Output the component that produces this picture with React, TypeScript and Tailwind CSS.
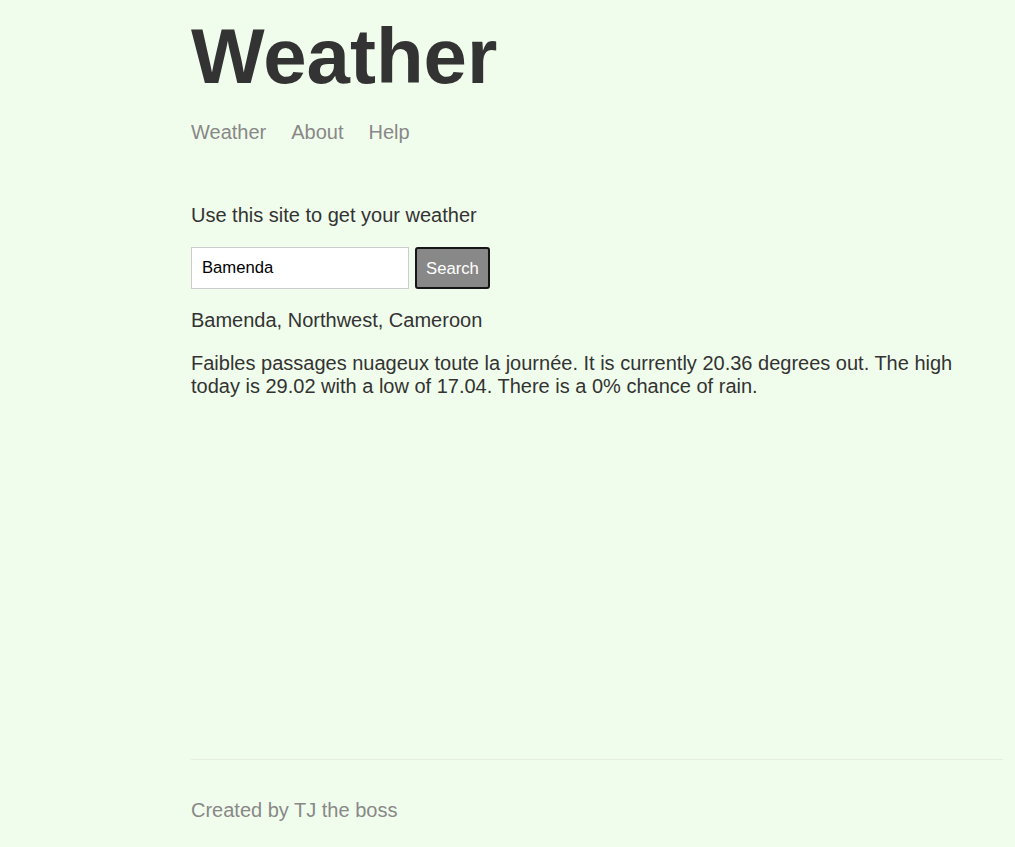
import { useState } from "react";

const App = () => {
    const [location, setLocation] = useState("Bamenda");

    return (
        <div className="min-h-screen bg-[#f1fdec] text-[#333333] font-['Liberation_Sans',Arial,sans-serif]">
            <div className="ml-[191px] w-[812px] min-h-screen flex flex-col">
                <div className="flex-grow">
                    {/* Header */}
                    <header className="mt-[17px] mb-[60px]">
                        <h1 className="text-[78px] leading-none font-bold mb-[26px]">Weather</h1>
                        <nav className="text-[20px] leading-[23px] text-[#888888]">
                            <a href="#" className="mr-[25px]">Weather</a>
                            <a href="#" className="mr-[25px]">About</a>
                            <a href="#">Help</a>
                        </nav>
                    </header>

                    <p className="text-[20px] leading-[23px] mb-[20px]">Use this site to get your weather</p>

                    {/* Search form */}
                    <form className="flex gap-[6px]" onSubmit={(e) => e.preventDefault()}>
                        <input
                            type="text"
                            value={location}
                            onChange={(e) => setLocation(e.target.value)}
                            className="w-[218px] h-[42px] bg-white border border-[#cccccc] px-[10px] text-[16.67px] text-black outline-none"
                        />
                        <button className="w-[75px] h-[42px] bg-[#888888] border-2 border-[#151515] rounded-[3px] text-white text-[16.67px]">
                            Search
                        </button>
                    </form>

                    <p className="text-[20px] leading-[23px] mt-[20px]">Bamenda, Northwest, Cameroon</p>
                    <p className="text-[20px] leading-[23px] mt-[20px]">
                        Faibles passages nuageux toute la journée. It is currently 20.36 degrees out. The high today is 29.02 with a low of 17.04. There is a 0% chance of rain.
                    </p>
                </div>

                <footer className="border-t border-[#e6eee2] pt-[39px] pb-[25px] text-[20px] leading-[23px] text-[#888888]">
                    Created by TJ the boss
                </footer>
            </div>
        </div>
    );
};

export default App;
